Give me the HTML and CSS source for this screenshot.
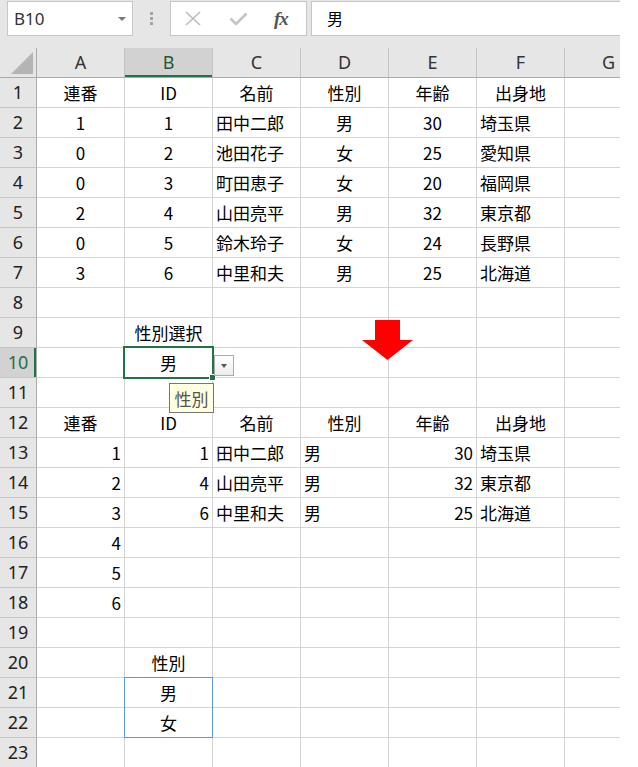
FILE: index.html
```html
<!DOCTYPE html>
<html lang="ja">
<head>
<meta charset="utf-8">
<title>Excel</title>
<link rel="stylesheet" href="styles.css">
</head>
<body>
<div class="app">
  <div class="toolbar">
    <div class="namebox"><span class="nb-text">B10</span><span class="nb-arrow"></span></div>
    <div class="grip"><i></i><i></i><i></i></div>
    <div class="fbuttons">
      <svg class="ic-x" width="16" height="15" viewBox="0 0 16 15"><path d="M1 1 L15 14 M15 1 L1 14" stroke="#bdbdbd" stroke-width="1.7" fill="none"/></svg>
      <svg class="ic-ok" width="19" height="14" viewBox="0 0 19 14"><path d="M1.5 6.5 L7 12 L17.5 1.5" stroke="#c4c4c4" stroke-width="2.6" fill="none"/></svg>
      <span class="fx">fx</span>
    </div>
    <div class="formula">男</div>
  </div>

  <div class="sheet">
    <div class="row head">
      <div class="corner"><span class="tri"></span></div>
      <div class="ch">A</div><div class="ch selh">B</div><div class="ch">C</div><div class="ch">D</div><div class="ch">E</div><div class="ch">F</div><div class="ch">G</div>
    </div>

    <div class="row"><div class="rh">1</div><div class="cell ctr">連番</div><div class="cell ctr">ID</div><div class="cell ctr">名前</div><div class="cell ctr">性別</div><div class="cell ctr">年齢</div><div class="cell ctr">出身地</div><div class="cell"></div></div>
    <div class="row"><div class="rh">2</div><div class="cell ctr">1</div><div class="cell ctr">1</div><div class="cell lt">田中二郎</div><div class="cell ctr">男</div><div class="cell ctr">30</div><div class="cell lt">埼玉県</div><div class="cell"></div></div>
    <div class="row"><div class="rh">3</div><div class="cell ctr">0</div><div class="cell ctr">2</div><div class="cell lt">池田花子</div><div class="cell ctr">女</div><div class="cell ctr">25</div><div class="cell lt">愛知県</div><div class="cell"></div></div>
    <div class="row"><div class="rh">4</div><div class="cell ctr">0</div><div class="cell ctr">3</div><div class="cell lt">町田恵子</div><div class="cell ctr">女</div><div class="cell ctr">20</div><div class="cell lt">福岡県</div><div class="cell"></div></div>
    <div class="row"><div class="rh">5</div><div class="cell ctr">2</div><div class="cell ctr">4</div><div class="cell lt">山田亮平</div><div class="cell ctr">男</div><div class="cell ctr">32</div><div class="cell lt">東京都</div><div class="cell"></div></div>
    <div class="row"><div class="rh">6</div><div class="cell ctr">0</div><div class="cell ctr">5</div><div class="cell lt">鈴木玲子</div><div class="cell ctr">女</div><div class="cell ctr">24</div><div class="cell lt">長野県</div><div class="cell"></div></div>
    <div class="row"><div class="rh">7</div><div class="cell ctr">3</div><div class="cell ctr">6</div><div class="cell lt">中里和夫</div><div class="cell ctr">男</div><div class="cell ctr">25</div><div class="cell lt">北海道</div><div class="cell"></div></div>
    <div class="row"><div class="rh">8</div><div class="cell"></div><div class="cell"></div><div class="cell"></div><div class="cell"></div><div class="cell"></div><div class="cell"></div><div class="cell"></div></div>
    <div class="row"><div class="rh">9</div><div class="cell"></div><div class="cell ctr">性別選択</div><div class="cell"></div>
      <div class="cell anchor">
        <svg class="arrow" width="51" height="40" viewBox="0 0 51 40"><polygon points="13,0 38,0 38,20 51,20 25.5,40 0,20 13,20" fill="#ff0000"/></svg>
      </div>
      <div class="cell"></div><div class="cell"></div><div class="cell"></div></div>
    <div class="row"><div class="rh selr">10</div><div class="cell"></div>
      <div class="cell ctr anchor">男
        <span class="selbox"><span class="handle"></span></span>
        <span class="ddbtn"><span class="ddtri"></span></span>
        <span class="tip">性別</span>
      </div>
      <div class="cell"></div><div class="cell"></div><div class="cell"></div><div class="cell"></div><div class="cell"></div></div>
    <div class="row"><div class="rh">11</div><div class="cell"></div><div class="cell"></div><div class="cell"></div><div class="cell"></div><div class="cell"></div><div class="cell"></div><div class="cell"></div></div>
    <div class="row"><div class="rh">12</div><div class="cell ctr">連番</div><div class="cell ctr">ID</div><div class="cell ctr">名前</div><div class="cell ctr">性別</div><div class="cell ctr">年齢</div><div class="cell ctr">出身地</div><div class="cell"></div></div>
    <div class="row"><div class="rh">13</div><div class="cell rt">1</div><div class="cell rt">1</div><div class="cell lt">田中二郎</div><div class="cell lt">男</div><div class="cell rt">30</div><div class="cell lt">埼玉県</div><div class="cell"></div></div>
    <div class="row"><div class="rh">14</div><div class="cell rt">2</div><div class="cell rt">4</div><div class="cell lt">山田亮平</div><div class="cell lt">男</div><div class="cell rt">32</div><div class="cell lt">東京都</div><div class="cell"></div></div>
    <div class="row"><div class="rh">15</div><div class="cell rt">3</div><div class="cell rt">6</div><div class="cell lt">中里和夫</div><div class="cell lt">男</div><div class="cell rt">25</div><div class="cell lt">北海道</div><div class="cell"></div></div>
    <div class="row"><div class="rh">16</div><div class="cell rt">4</div><div class="cell"></div><div class="cell"></div><div class="cell"></div><div class="cell"></div><div class="cell"></div><div class="cell"></div></div>
    <div class="row"><div class="rh">17</div><div class="cell rt">5</div><div class="cell"></div><div class="cell"></div><div class="cell"></div><div class="cell"></div><div class="cell"></div><div class="cell"></div></div>
    <div class="row"><div class="rh">18</div><div class="cell rt">6</div><div class="cell"></div><div class="cell"></div><div class="cell"></div><div class="cell"></div><div class="cell"></div><div class="cell"></div></div>
    <div class="row"><div class="rh">19</div><div class="cell"></div><div class="cell"></div><div class="cell"></div><div class="cell"></div><div class="cell"></div><div class="cell"></div><div class="cell"></div></div>
    <div class="row"><div class="rh">20</div><div class="cell"></div><div class="cell ctr">性別</div><div class="cell"></div><div class="cell"></div><div class="cell"></div><div class="cell"></div><div class="cell"></div></div>
    <div class="row"><div class="rh">21</div><div class="cell"></div><div class="cell ctr anchor">男<span class="listbox"></span></div><div class="cell"></div><div class="cell"></div><div class="cell"></div><div class="cell"></div><div class="cell"></div></div>
    <div class="row"><div class="rh">22</div><div class="cell"></div><div class="cell ctr">女</div><div class="cell"></div><div class="cell"></div><div class="cell"></div><div class="cell"></div><div class="cell"></div></div>
    <div class="row"><div class="rh">23</div><div class="cell"></div><div class="cell"></div><div class="cell"></div><div class="cell"></div><div class="cell"></div><div class="cell"></div><div class="cell"></div></div>
  </div>
</div>
</body>
</html>
```

FILE: styles.css
```css
html, body {
  margin: 0;
  padding: 0;
  background: #ffffff;
}

body {
  font-family: "Noto Sans CJK JP", "Noto Sans", sans-serif;
  color: #000;
}

.app {
  width: 620px;
  overflow: hidden;
}

/* ---------- toolbar ---------- */
.toolbar {
  height: 48px;
  background: #e6e6e6;
  display: flex;
  align-items: flex-start;
  padding-top: 1px;
  box-sizing: border-box;
}

.namebox {
  margin-left: 7px;
  width: 126px;
  height: 35px;
  box-sizing: border-box;
  background: #fff;
  border: 1px solid #c6c6c6;
  display: flex;
  align-items: center;
  justify-content: space-between;
  padding: 0 6px 0 6px;
}

.nb-text {
  font-family: "Noto Sans", sans-serif;
  font-size: 17px;
  color: #333;
  line-height: 1;
}

.nb-arrow {
  width: 0;
  height: 0;
  border-left: 4px solid transparent;
  border-right: 4px solid transparent;
  border-top: 4px solid #777;
}

.grip {
  width: 37px;
  height: 35px;
  display: flex;
  flex-direction: column;
  align-items: center;
  justify-content: center;
  gap: 2px;
}

.grip i {
  display: block;
  width: 3px;
  height: 3px;
  background: #a6a6a6;
}

.fbuttons {
  width: 137px;
  height: 35px;
  box-sizing: border-box;
  background: #fff;
  border: 1px solid #c6c6c6;
  display: flex;
  align-items: center;
  padding-left: 14px;
}

.ic-x {
  margin-right: 28px;
}

.ic-ok {
  margin-right: 26px;
  margin-top: 1px;
}

.fx {
  font-family: "Liberation Serif", serif;
  font-style: italic;
  font-weight: bold;
  font-size: 19px;
  color: #555;
  line-height: 1;
  letter-spacing: -1px;
}

.formula {
  margin-left: 4px;
  flex: 1;
  height: 35px;
  box-sizing: border-box;
  background: #fff;
  border: 1px solid #c6c6c6;
  border-right: none;
  padding-left: 15px;
  font-size: 16px;
  line-height: 32px;
}

/* ---------- sheet ---------- */
.row {
  display: grid;
  grid-template-columns: 37px repeat(7, 88px);
  height: 30px;
}

.cell,
.ch,
.rh,
.corner {
  box-sizing: border-box;
  height: 30px;
  display: flex;
  align-items: center;
  white-space: nowrap;
}

.cell {
  border-right: 1px solid #d4d4d4;
  border-bottom: 1px solid #d4d4d4;
  font-size: 17px;
  padding: 0 3px 1px 3px;
  background: #fff;
}

.ctr { justify-content: center; }
.lt  { justify-content: flex-start; }
.rt  { justify-content: flex-end; }

.ch {
  background: #e6e6e6;
  border-right: 1px solid #c4c4c4;
  border-bottom: 1px solid #ababab;
  justify-content: center;
  font-family: "Noto Sans", sans-serif;
  font-size: 18px;
  color: #333;
  padding-bottom: 1px;
}

.selh {
  background: #d2d2d2;
  color: #1d5c36;
  box-shadow: inset 0 -2px 0 #217346;
}

.corner {
  background: #e6e6e6;
  border-right: 1px solid #ababab;
  border-bottom: 1px solid #ababab;
  justify-content: flex-end;
  align-items: flex-end;
  padding: 0 3px 3px 0;
}

.tri {
  display: block;
  width: 22px;
  height: 22px;
  background: #b4b4b4;
  clip-path: polygon(100% 0, 100% 100%, 0 100%);
}

.rh {
  background: #e6e6e6;
  border-right: 1px solid #ababab;
  border-bottom: 1px solid #c6c6c6;
  justify-content: center;
  font-family: "Noto Sans", sans-serif;
  font-size: 18px;
  color: #222;
  padding-bottom: 1px;
}

.selr {
  background: #d2d2d2;
  color: #217346;
  box-shadow: inset -2px 0 0 #217346;
}

/* ---------- overlays ---------- */
.anchor {
  position: relative;
}

.arrow {
  position: absolute;
  left: 61px;
  top: 2px;
  z-index: 5;
}

.selbox {
  position: absolute;
  left: -2px;
  top: -2px;
  width: 91px;
  height: 33px;
  box-sizing: border-box;
  border: 2px solid #217346;
  z-index: 6;
}

.handle {
  position: absolute;
  right: -4px;
  bottom: -4px;
  width: 5px;
  height: 5px;
  background: #217346;
  border: 1px solid #fff;
}

.ddbtn {
  position: absolute;
  left: 89px;
  top: 7px;
  width: 20px;
  height: 21px;
  box-sizing: border-box;
  border: 1px solid #ababab;
  background: linear-gradient(#ffffff, #ececec);
  display: flex;
  align-items: center;
  justify-content: center;
  z-index: 7;
}

.ddtri {
  width: 0;
  height: 0;
  border-left: 3.5px solid transparent;
  border-right: 3.5px solid transparent;
  border-top: 4px solid #555;
}

.tip {
  position: absolute;
  left: 44px;
  top: 35px;
  width: 45px;
  height: 30px;
  box-sizing: border-box;
  background: #ffffe1;
  border: 1px solid #767676;
  font-size: 17px;
  color: #555;
  display: flex;
  align-items: center;
  justify-content: center;
  z-index: 8;
}

.listbox {
  position: absolute;
  left: -1px;
  top: -1px;
  width: 89px;
  height: 61px;
  box-sizing: border-box;
  border: 1px solid #5b9bd5;
  z-index: 4;
}
```
